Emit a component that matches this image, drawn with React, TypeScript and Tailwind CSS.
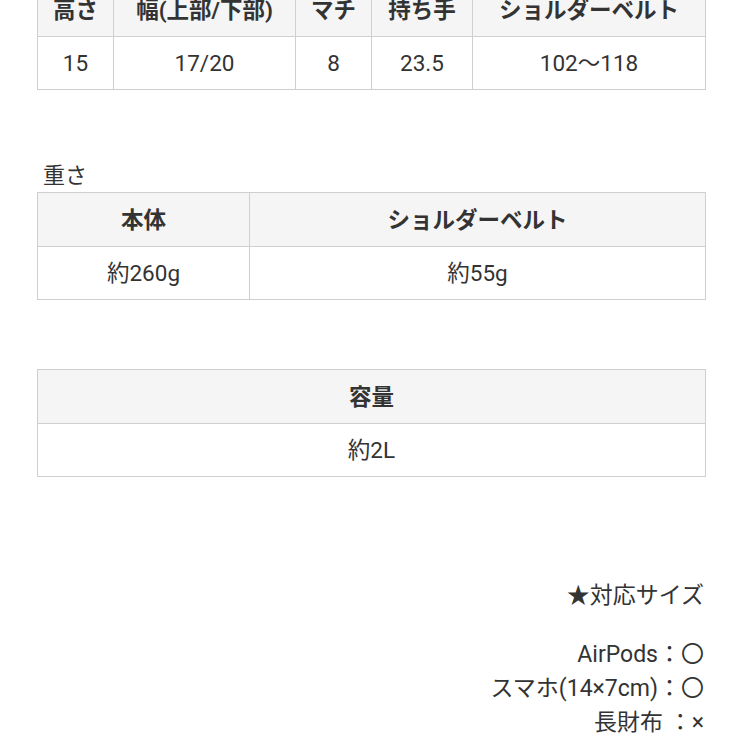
import React from "react";

const font = { fontFamily: 'Roboto, "Noto Sans CJK JP", sans-serif' };

function Table({ cols, head, body }: { cols: number[]; head: string[]; body: string[] }) {
  return (
    <table className="w-[668px] table-fixed border-collapse text-[22.5px] text-[#333]">
      <colgroup>
        {cols.map((w, i) => (
          <col key={i} style={{ width: w }} />
        ))}
      </colgroup>
      <tbody>
        <tr className="h-[54px] bg-[#f5f5f5]">
          {head.map((h, i) => (
            <th key={i} className="border border-[#cfcfcf] p-0 text-center font-bold leading-[26px]">
              {h}
            </th>
          ))}
        </tr>
        <tr className="h-[53px] bg-white">
          {body.map((b, i) => (
            <td key={i} className="border border-[#cfcfcf] p-0 text-center font-normal leading-[26px]">
              {b}
            </td>
          ))}
        </tr>
      </tbody>
    </table>
  );
}

export default function App() {
  return (
    <div className="w-[742px] h-[742px] overflow-hidden bg-white text-[#333]" style={font}>
      <div className="pl-[37px] pr-[37px]">
        <div className="-mt-[18px]">
          <Table
            cols={[76, 182, 76, 101, 233]}
            head={["高さ", "幅(上部/下部)", "マチ", "持ち手", "ショルダーベルト"]}
            body={["15", "17/20", "8", "23.5", "102〜118"]}
          />
        </div>
        <div className="mt-[72px] pl-[6px] text-[22px] leading-[28px]">重さ</div>
        <div className="mt-[2px]">
          <Table cols={[212, 456]} head={["本体", "ショルダーベルト"]} body={["約260g", "約55g"]} />
        </div>
        <div className="mt-[69px]">
          <Table cols={[668]} head={["容量"]} body={["約2L"]} />
        </div>
        <div className="mt-[102px] flex flex-col items-end text-[23px] leading-[34px] pr-[1px]">
          <div>★対応サイズ</div>
          <div className="mt-[25px]">AirPods：〇</div>
          <div>スマホ(14×7cm)：〇</div>
          <div>長財布 ：×</div>
        </div>
      </div>
    </div>
  );
}
